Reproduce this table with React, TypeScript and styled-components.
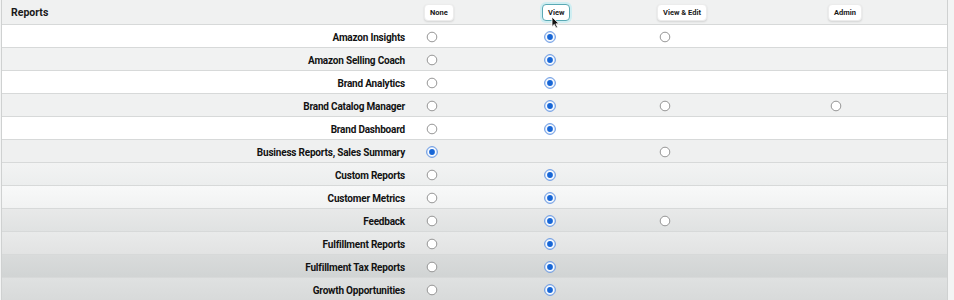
import React from "react";
import styled, { createGlobalStyle } from "styled-components";

const Global = createGlobalStyle`
  html, body { margin: 0; padding: 0; background: #f4f4f4; }
  body { font-family: Roboto, "Open Sans", Arial, sans-serif; color: #111; overflow: hidden; }
`;

const Page = styled.div`
  position: relative;
  width: 954px;
  height: 300px;
  overflow: hidden;
  background: #f3f4f4;
`;

const Table = styled.div`
  margin-left: 1px;
  width: 945px;
  border-left: 1px solid #cfd1d1;
  border-right: 1px solid #cfd1d1;
`;

const Row = styled.div<{ $bg: string; $h: number }>`
  display: grid;
  grid-template-columns: 422px 118px 115px 171px 1fr;
  align-items: center;
  height: ${(p) => p.$h}px;
  border-bottom: 1px solid #d7d9d9;
  background: ${(p) => p.$bg};
`;

const HeaderTitle = styled.div`
  padding-left: 9px;
  font-size: 10.5px;
  font-weight: 700;
  color: #1a1a1a;
`;

const Label = styled.div`
  text-align: right;
  padding-right: 19px;
  padding-top: 2px;
  font-size: 10px;
  letter-spacing: -0.2px;
  font-weight: 700;
  color: #121212;
  white-space: nowrap;
`;

const Cell = styled.div`
  display: flex;
  align-items: center;
  padding-left: 2px;
  padding-top: 1px;
`;

const HeadCell = styled.div`
  display: flex;
  align-items: center;
`;

const Pill = styled.span<{ $focus?: boolean }>`
  display: inline-flex;
  align-items: center;
  justify-content: center;
  height: 15px;
  padding: 0 5px;
  font-size: 7.5px;
  font-weight: 700;
  color: #1a1a1a;
  background: #fff;
  border-radius: 4px;
  border: 1px solid ${(p) => (p.$focus ? "#5aa9b4" : "#ececec")};
  box-shadow: ${(p) =>
    p.$focus ? "0 0 0 2px #cfeef2" : "0 1px 2px rgba(0,0,0,0.12)"};
`;

const Cursor = styled.svg`
  position: absolute;
  left: 551px;
  top: 16px;
`;

const Radio = ({ checked }: { checked: boolean }) =>
  checked ? (
    <svg width="12" height="12" viewBox="0 0 12 12">
      <circle cx="6" cy="6" r="5.4" fill="#dbe8fa" stroke="#5b8fe0" strokeWidth="0.9" />
      <circle cx="6" cy="6" r="3.9" fill="#fff" />
      <circle cx="6" cy="6" r="2.9" fill="#1766d6" />
    </svg>
  ) : (
    <svg width="12" height="12" viewBox="0 0 12 12">
      <circle cx="6" cy="6" r="4.8" fill="#fff" stroke="#8a8a8a" strokeWidth="0.9" />
    </svg>
  );

type Opt = "n" | "v" | "e" | "a";
interface Item {
  name: string;
  opts: Opt[];
  sel: Opt;
  bg: string;
}

const rows: Item[] = [
  { name: "Amazon Insights", opts: ["n", "v", "e"], sel: "v", bg: "#ffffff" },
  { name: "Amazon Selling Coach", opts: ["n", "v"], sel: "v", bg: "#f1f2f2" },
  { name: "Brand Analytics", opts: ["n", "v"], sel: "v", bg: "#ffffff" },
  { name: "Brand Catalog Manager", opts: ["n", "v", "e", "a"], sel: "v", bg: "#f0f1f1" },
  { name: "Brand Dashboard", opts: ["n", "v"], sel: "v", bg: "#ffffff" },
  { name: "Business Reports, Sales Summary", opts: ["n", "e"], sel: "n", bg: "#eff0f0" },
  { name: "Custom Reports", opts: ["n", "v"], sel: "v", bg: "linear-gradient(#f2f3f3, #eceeee)" },
  { name: "Customer Metrics", opts: ["n", "v"], sel: "v", bg: "linear-gradient(#f8f9f9, #f1f2f2)" },
  { name: "Feedback", opts: ["n", "v", "e"], sel: "v", bg: "linear-gradient(#e8e9e9, #e0e2e2)" },
  { name: "Fulfillment Reports", opts: ["n", "v"], sel: "v", bg: "linear-gradient(#e9eaea, #e2e3e3)" },
  { name: "Fulfillment Tax Reports", opts: ["n", "v"], sel: "v", bg: "linear-gradient(#d9dbdb, #d1d4d4)" },
  { name: "Growth Opportunities", opts: ["n", "v"], sel: "v", bg: "linear-gradient(#dfe1e1, #d8dada)" },
  { name: "", opts: [], sel: "n", bg: "linear-gradient(#cdd0d0, #c6c9c9)" },
];

const cols: Opt[] = ["n", "v", "e", "a"];

export default function App() {
  return (
    <Page>
      <Global />
      <Table>
        <Row $bg="#f0f1f1" $h={24}>
          <HeaderTitle>Reports</HeaderTitle>
          <HeadCell><Pill>None</Pill></HeadCell>
          <HeadCell><Pill $focus>View</Pill></HeadCell>
          <HeadCell><Pill>View &amp; Edit</Pill></HeadCell>
          <HeadCell><Pill>Admin</Pill></HeadCell>
        </Row>
        {rows.map((r, i) => (
          <Row key={i} $bg={r.bg} $h={22}>
            <Label>{r.name}</Label>
            {cols.map((c) => (
              <Cell key={c}>{r.opts.includes(c) ? <Radio checked={r.sel === c} /> : null}</Cell>
            ))}
          </Row>
        ))}
      </Table>
      <Cursor width="9" height="13" viewBox="0 0 9 13">
        <path d="M1 1 L1 10.5 L3.3 8.4 L5 12 L6.5 11.3 L4.9 7.8 L8 7.8 Z" fill="#111" stroke="#fff" strokeWidth="0.8" />
      </Cursor>
    </Page>
  );
}
